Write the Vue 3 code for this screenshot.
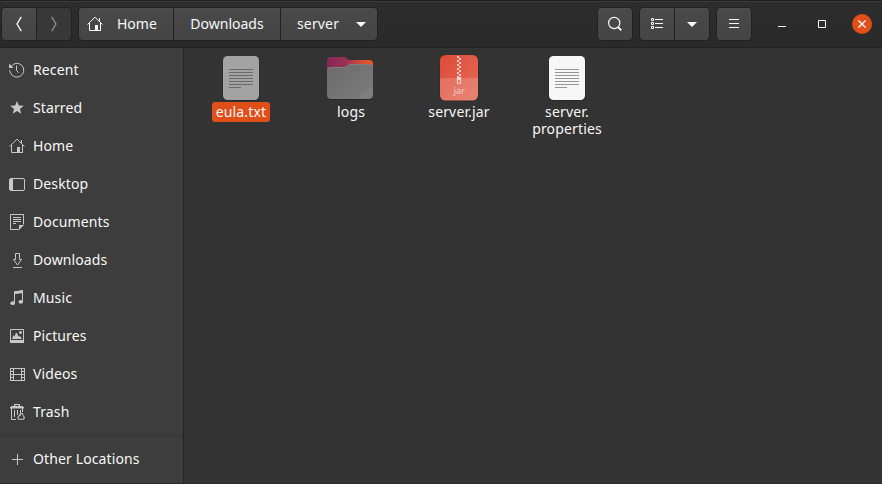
<script setup>
const places = ['Recent', 'Starred', 'Home', 'Desktop', 'Documents', 'Downloads', 'Music', 'Pictures', 'Videos', 'Trash']
const files = [
  { name: 'eula.txt', kind: 'text', selected: true },
  { name: 'logs', kind: 'folder' },
  { name: 'server.jar', kind: 'jar' },
  { name: 'server.\nproperties', kind: 'text' }
]
</script>

<template>
  <div class="window">
    <header class="bar">
      <div class="group nav">
        <button class="btn w34"><svg width="16" height="16" viewBox="0 0 16 16"><path class="stroke" d="M10.3.8 6 8l4.3 7.2" stroke-width="1.3" /></svg></button>
        <button class="btn w34 off"><svg width="16" height="16" viewBox="0 0 16 16"><path class="stroke" d="M5.7.8 10 8l-4.3 7.2" stroke-width="1.3" /></svg></button>
      </div>
      <div class="group path">
        <button class="btn home">
          <svg width="16" height="16" viewBox="0 0 16 16"><path class="stroke" d="M.6 8.5 8 1.1l7.4 7.4M2.5 7v7.5H8M13.5 7v8M12.5 2v3" /><path class="fill" d="M8 9h3v6H8z" /><path class="stroke" d="M11 14.5h3" /></svg>
          <span>Home</span>
        </button>
        <button class="btn downloads"><span>Downloads</span></button>
        <button class="btn current"><span>server</span><svg width="10" height="5" viewBox="0 0 10 5"><path class="fill" d="M0 0h10L5 5z" /></svg></button>
      </div>
      <div class="group search">
        <button class="btn w34"><svg width="16" height="16" viewBox="0 0 16 16"><circle class="stroke" cx="7.2" cy="7" r="5.6" stroke-width="1.2" /><path class="stroke" d="m11 11 3.4 3.4" stroke-width="1.8" /></svg></button>
      </div>
      <div class="group views">
        <button class="btn w34"><svg width="16" height="16" viewBox="0 0 16 16"><path class="stroke" d="M2.5 2.5h2v2h-2zM2.5 6.5h2v2h-2zM2.5 10.5h2v2h-2zM6 3.5h8M6 7.5h8M6 11.5h8" /></svg></button>
        <button class="btn w34"><svg width="10" height="5" viewBox="0 0 10 5"><path class="fill" d="M0 0h10L5 5z" /></svg></button>
      </div>
      <div class="group menu">
        <button class="btn w34"><svg width="16" height="16" viewBox="0 0 16 16"><path class="stroke" d="M3 3.5h10M3 7.5h10M3 11.5h10" /></svg></button>
      </div>
      <div class="controls">
        <svg width="8" height="8" viewBox="0 0 8 8"><path class="fill" d="M0 6h8v1H0z" /></svg>
        <svg width="8" height="8" viewBox="0 0 8 8"><path class="stroke" d="M.5.5h7v7h-7z" /></svg>
        <span class="close"><svg width="8" height="8" viewBox="0 0 8 8"><path class="stroke" d="m.4.4 7.2 7.2M7.6.4.4 7.6" stroke-width="1.4" /></svg></span>
      </div>
    </header>

    <div class="body">
      <aside class="side">
        <div v-for="p in places" :key="p" class="row">
          <svg width="16" height="16" viewBox="0 0 16 16">
            <g v-if="p === 'Recent'"><path class="stroke" d="M2 4.6A6.9 6.9 0 1 1 1.2 10" /><path class="stroke" d="M.8 8.2v1.6" /><path class="fill" d="M0 1.6V6h4.5z" /><path class="stroke" d="M7.5 3.5v5l2.2 2.2" /></g>
            <path v-else-if="p === 'Starred'" class="fill" d="m8 1 1.8 4.6 5 .2-3.9 3.1 1.4 4.9L8 11.1l-4.3 2.7 1.4-4.9-3.9-3.1 5-.2z" />
            <g v-else-if="p === 'Home'"><path class="stroke" d="M.6 8.5 8 1.1l7.4 7.4M2.5 7v7.5H8M13.5 7v8M12.5 2v3" /><path class="fill" d="M8 9h3v6H8z" /><path class="stroke" d="M11 14.5h3" /></g>
            <g v-else-if="p === 'Desktop'"><rect class="stroke" x=".5" y="2.5" width="15" height="12" rx="1.5" /><path class="fill" d="M1 3h3v11H1z" /></g>
            <g v-else-if="p === 'Documents'"><path class="stroke" d="M14.5 10.5V.5h-13v15h8.5M4 3.5h8M4 5.5h8M4 7.5h8M4 9.5h3" /><path class="fill" d="M10 16v-5h5z" /></g>
            <g v-else-if="p === 'Downloads'"><path class="stroke" d="M6.5 1.5h4v6h2L8.5 13l-4-5.500h2zM4 15.500h9" /></g>
            <g v-else-if="p === 'Music'"><path class="stroke" d="M5.5 13V2l8-1v10.500" /><path class="fill" d="M5 1.500 14 0v3L5 4.300z" /><ellipse class="fill" cx="3.700" cy="13.200" rx="2.300" ry="1.900" /><ellipse class="fill" cx="11.800" cy="11.800" rx="2.300" ry="1.900" /></g>
            <g v-else-if="p === 'Pictures'"><path class="stroke" d="M1.500 1.500h13v13h-13z" /><path class="fill" d="M1 12h14v3H1zM3 11l1.500-4 1 1.500 1.300-3.500h1L10 9l1-1.200 2 3.200z" /><circle class="fill" cx="11.500" cy="4.500" r="1.500" /></g>
            <g v-else-if="p === 'Videos'"><path class="stroke" d="M4.500 2v13M12.500 2v13M4 2.500h9M4 8.500h9M4 14.500h9M1.500 2v13M15.500 2v13" /><path class="stroke" d="M3 2v13M14 2v13" stroke-dasharray="1 2" stroke-width="2" /></g>
            <g v-else><path class="fill" d="M1 3h14v1.500H1zM2 2h12v1H2zM5 0h6v2H9.700V1H6.300v1H5z" /><path class="stroke" d="M2.500 4v11.500H7M13.500 4v4M5.500 6v7M8.500 6v5M11.500 6v3" /><path class="stroke" d="m10.500 11.300 1.200-1.800h1.500l1 1.600M10.500 11.300l-1.700 2.500.8 1.500h4.800l1-1.500-1.200-2.200M10 11.300h2" stroke-width="1.100" /></g>
          </svg>
          <span>{{ p }}</span>
        </div>
        <div class="rule"></div>
        <div class="row"><svg width="16" height="16" viewBox="0 0 16 16"><path class="stroke" d="M3 8.500h11M8.500 3v11" /></svg><span>Other Locations</span></div>
      </aside>

      <main class="files">
        <div v-for="f in files" :key="f.name" class="file">
          <svg class="thumb" :class="{ dim: f.selected }" width="48" height="48" viewBox="0 0 48 48">
            <g v-if="f.kind === 'text'">
              <rect class="shade" x="5.500" y="2" width="37" height="45" rx="5" />
              <rect class="paper" x="6" y="2" width="36" height="44" rx="4.500" />
              <path class="print" d="M12 15.500h24M12 18.500h24M12 21.500h24M12 24.500h24M12 27.500h24M12 30.500h24M12 33.500h12" />
            </g>
            <g v-else-if="f.kind === 'folder'">
              <defs>
                <linearGradient id="tab"><stop offset="0" stop-color="#84275b" /><stop offset=".42" stop-color="#9b3154" /><stop offset=".7" stop-color="#cf493a" /><stop offset="1" stop-color="#f15a22" /></linearGradient>
                <linearGradient id="front" x2="1" y2="1"><stop offset="0" stop-color="#6b6b6b" /><stop offset=".82" stop-color="#797979" /><stop offset=".83" stop-color="#7f7f7f" /><stop offset="1" stop-color="#7b7b7b" /></linearGradient>
              </defs>
              <path class="shade" d="M1 13h46v29q0 4-4 4H5q-4 0-4-4z" />
              <path d="M1 7q0-4 4-4h13q2 0 3 1.500L22.500 6H43q4 0 4 4v12H1z" fill="url(#tab)" />
              <path d="M1 17q0-4 4-4h13q2 0 3-1l1-1q1-1 3-1h18q4 0 4 4v27q0 4-4 4H5q-4 0-4-4z" fill="url(#front)" />
              <path d="M1.500 16q0-2.500 3.500-2.500h13q2 0 3-1l1-1q1-1 3-1h18q3 0 3.500 2.500" fill="none" stroke="#858585" stroke-width=".7" />
            </g>
            <g v-else>
              <defs><linearGradient id="jar" x2="1" y2="1"><stop offset="0" stop-color="#df4a36" /><stop offset="1" stop-color="#e36d5c" /></linearGradient></defs>
              <rect class="shade" x="4.500" y="1" width="39" height="46.500" rx="6" />
              <rect x="5" y="1" width="38" height="45.500" rx="5.500" fill="url(#jar)" />
              <path d="M5 24h38v17q0 5.500-5.500 5.500h-27Q5 46.500 5 41z" fill="#fff" opacity=".16" />
              <path class="zip" d="M23 2v22" stroke-dasharray="2 2" />
              <path class="zip" d="M25 4v20" stroke-dasharray="2 2" />
              <path d="M22.500 23.500h3v6h-3z" fill="none" stroke="#f6ccc5" stroke-width="1.200" /><path d="M22 23h4v3h-4z" fill="#f6ccc5" />
              <text x="24.300" y="40" text-anchor="middle" class="jarword">jar</text>
            </g>
          </svg>
          <div class="name" :class="{ selected: f.selected, folder: f.kind === 'folder' }">{{ f.name }}</div>
        </div>
      </main>
    </div>
  </div>
</template>

<style>
body { margin: 0; background: #333; }
</style>

<style scoped>
.window { width: 882px; height: 484px; box-sizing: border-box; display: flex; flex-direction: column; overflow: hidden; background: #333; color: #f7f7f7; font-family: "Noto Sans", sans-serif; font-size: 14px; border-bottom: 1px solid #2d292c; }
svg { display: block; flex: none; }
.stroke { fill: none; stroke: currentColor; }
.fill { fill: currentColor; }
.bar { height: 48px; flex: none; box-sizing: border-box; display: flex; align-items: flex-start; padding: 6px 10px 0 1px; background: linear-gradient(#2d2d2d, #2a2a2a); border-top: 1px solid #202020; border-bottom: 1px solid #222; box-shadow: inset 0 1px #3b3b3b; }
.group { display: flex; gap: 1px; padding: 1px; height: 32px; background: #212121; border-radius: 5px; margin-right: 6px; }
.btn { display: flex; align-items: center; justify-content: center; height: 32px; box-sizing: border-box; border: 0; padding: 0; margin: 0; background: linear-gradient(#494949, #454545); color: #f7f7f7; font: inherit; line-height: 18px; box-shadow: inset 0 1px #4d4d4d; }
.btn:first-child { border-radius: 4px 0 0 4px; }
.btn:last-child { border-radius: 0 4px 4px 0; }
.btn:only-child { border-radius: 4px; }
.w34 { width: 34px; }
.off { background: #383838; color: #929292; box-shadow: none; }
.home { width: 94px; justify-content: flex-start; padding-left: 8px; gap: 14px; }
.downloads { width: 106px; }
.current { width: 96px; justify-content: flex-start; padding-left: 16px; gap: 17px; letter-spacing: .15px; }
.search { margin-left: auto; }
.views { margin-right: 6px; }
.menu { margin-right: 26px; }
.controls { display: flex; align-items: center; gap: 32px; height: 34px; }
.close { width: 20px; height: 20px; margin-left: -6px; border-radius: 50%; background: #e04e1a; display: flex; align-items: center; justify-content: center; }
.body { flex: 1; display: flex; min-height: 0; }
.side { width: 183px; flex: none; padding-top: 3px; background: #3d3d3d; border-right: 1px solid #232323; }
.row { height: 38px; display: flex; align-items: center; gap: 8px; padding-left: 9px; }
.row svg { color: #c8c8c8; }
.row span { line-height: 18px; letter-spacing: .12px; }
.rule { height: 1px; margin: 4px 0; background: #353535; }
.files { display: grid; grid-template-columns: 108px 108px 108px 106px; column-gap: 1px; align-content: start; padding: 6px 0 0 3px; }
.file { display: flex; flex-direction: column; align-items: center; }
.name { white-space: pre-line; text-align: center; line-height: 17px; padding: 1px 4px 2px; border-radius: 3px; letter-spacing: .15px; }
.folder { margin-left: 2px; }
.selected { background: #e04e1a; }
.shade { fill: #242424; opacity: .65; }
.paper { fill: #f7f7f7; }
.print { stroke: #969696; stroke-width: 1; fill: none; }
.dim .paper { fill: #a3a3a3; }
.dim .print { stroke: #6a6a6a; }
.zip { stroke: #f6ccc5; stroke-width: 2; }
.jarword { font-size: 9px; fill: #f6ccc5; letter-spacing: 0; }
</style>
